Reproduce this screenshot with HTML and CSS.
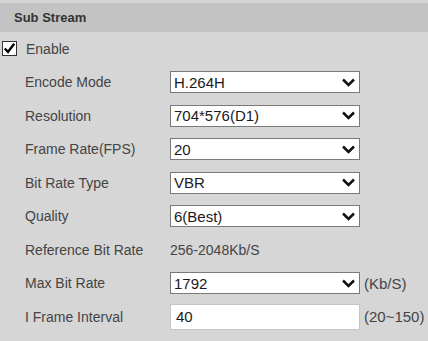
FILE: index.html
```html
<!DOCTYPE html>
<html lang="en">
<head>
  <meta charset="UTF-8" />
  <title>Sub Stream</title>
  <link rel="stylesheet" href="styles.css">
</head>
<body>
  <div class="panel">
    <div class="panel-title">Sub Stream</div>
    <div class="form">
      <div class="row enable-row">
        <span class="check">
          <svg width="15" height="15" viewBox="0 0 15 15">
            <rect x="0.5" y="0.5" width="14" height="14" fill="#fff" stroke="#333"/>
            <path d="M2.8 7.5 L6 11 L12.2 2.8" fill="none" stroke="#000" stroke-width="2.4"/>
          </svg>
        </span>
        <span class="label">Enable</span>
      </div>
      <div class="row">
        <span class="label field-label">Encode Mode</span>
        <div class="select"><span>H.264H</span><svg class="chev" width="13" height="9" viewBox="0 0 13 9"><path d="M1 1.5 L6.5 7 L12 1.5" fill="none" stroke="#111" stroke-width="2.5"/></svg></div>
      </div>
      <div class="row">
        <span class="label field-label">Resolution</span>
        <div class="select"><span>704*576(D1)</span><svg class="chev" width="13" height="9" viewBox="0 0 13 9"><path d="M1 1.5 L6.5 7 L12 1.5" fill="none" stroke="#111" stroke-width="2.5"/></svg></div>
      </div>
      <div class="row">
        <span class="label field-label">Frame Rate(FPS)</span>
        <div class="select"><span>20</span><svg class="chev" width="13" height="9" viewBox="0 0 13 9"><path d="M1 1.5 L6.5 7 L12 1.5" fill="none" stroke="#111" stroke-width="2.5"/></svg></div>
      </div>
      <div class="row">
        <span class="label field-label">Bit Rate Type</span>
        <div class="select"><span>VBR</span><svg class="chev" width="13" height="9" viewBox="0 0 13 9"><path d="M1 1.5 L6.5 7 L12 1.5" fill="none" stroke="#111" stroke-width="2.5"/></svg></div>
      </div>
      <div class="row">
        <span class="label field-label">Quality</span>
        <div class="select"><span>6(Best)</span><svg class="chev" width="13" height="9" viewBox="0 0 13 9"><path d="M1 1.5 L6.5 7 L12 1.5" fill="none" stroke="#111" stroke-width="2.5"/></svg></div>
      </div>
      <div class="row">
        <span class="label field-label">Reference Bit Rate</span>
        <span class="label">256-2048Kb/S</span>
      </div>
      <div class="row">
        <span class="label field-label">Max Bit Rate</span>
        <div class="select"><span>1792</span><svg class="chev" width="13" height="9" viewBox="0 0 13 9"><path d="M1 1.5 L6.5 7 L12 1.5" fill="none" stroke="#111" stroke-width="2.5"/></svg></div>
        <span class="unit">(Kb/S)</span>
      </div>
      <div class="row">
        <span class="label field-label">I Frame Interval</span>
        <div class="text-input">40</div>
        <span class="unit">(20~150)</span>
      </div>
    </div>
  </div>
</body>
</html>
```

FILE: styles.css
```css
body {
  margin: 0;
  background-color: #d6d6d6;
  font-family: "Liberation Sans", Arial, sans-serif;
  color: #444;
}
.panel {
  padding-top: 3px;
}
.panel-title {
  height: 29px;
  line-height: 29px;
  background-color: #c3c3c3;
  padding-left: 14px;
  font-size: 13px;
  font-weight: bold;
  color: #333;
}
.form {
  display: grid;
  grid-auto-rows: 33.5px;
}
.row {
  display: flex;
  align-items: center;
  padding-left: 25px;
}
.enable-row {
  padding-left: 2px;
}
.check {
  width: 15px;
  height: 15px;
  margin-right: 9px;
  display: flex;
}
.label {
  font-size: 14px;
  color: #444;
}
.field-label {
  width: 145px;
}
.select {
  box-sizing: border-box;
  width: 190px;
  height: 22px;
  border: 1px solid #7a7a7a;
  background-color: #fff;
  display: flex;
  align-items: center;
  justify-content: space-between;
  padding: 0 4px 0 3px;
  font-size: 15px;
  color: #1a1a1a;
}
.chev {
  display: block;
}
.text-input {
  box-sizing: border-box;
  width: 190px;
  height: 26px;
  border: 1px solid #c4c4c4;
  background-color: #fff;
  padding-left: 5px;
  display: flex;
  align-items: center;
  font-size: 15px;
  color: #1a1a1a;
}
.unit {
  margin-left: 4px;
  font-size: 15px;
  color: #444;
}
```
